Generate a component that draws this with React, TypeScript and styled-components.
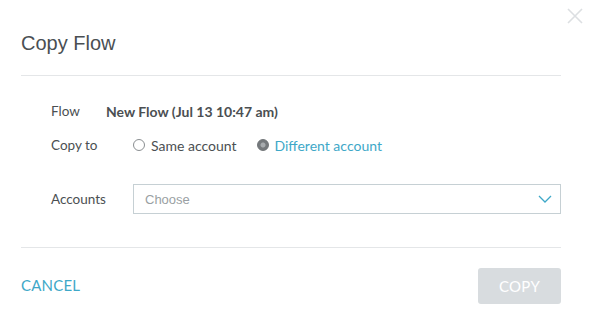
import styled, { createGlobalStyle } from "styled-components";

const GlobalStyle = createGlobalStyle`
  html, body {
    margin: 0;
    padding: 0;
    background: #ffffff;
  }
  body {
    font-family: "Lato", "Open Sans", sans-serif;
  }
`;

const TEAL = "#3ea8c8";

export default function App() {
  return (
    <>
      <GlobalStyle />
      <S.Dialog>
        <S.Close aria-label="close">
          <svg width="16" height="16" viewBox="0 0 16 16">
            <path d="M1 1 L15 15 M15 1 L1 15" stroke="#dcdfe2" strokeWidth="1.6" fill="none" />
          </svg>
        </S.Close>
        <S.Header>
          <S.Title>Copy Flow</S.Title>
        </S.Header>
        <S.Body>
          <S.Row $height={34}>
            <S.Label $width={55}>Flow</S.Label>
            <S.Value>New Flow (Jul 13 10:47 am)</S.Value>
          </S.Row>
          <S.Row $height={34}>
            <S.Label $width={82}>Copy to</S.Label>
            <S.RadioGroup>
              <S.RadioOption>
                <S.Radio />
                <S.RadioText>Same account</S.RadioText>
              </S.RadioOption>
              <S.RadioOption>
                <S.Radio $checked />
                <S.RadioText $active>Different account</S.RadioText>
              </S.RadioOption>
            </S.RadioGroup>
          </S.Row>
          <S.Row $height={30} $top={22}>
            <S.Label $width={82}>Accounts</S.Label>
            <S.Select>
              <S.Placeholder>Choose</S.Placeholder>
              <svg width="14" height="8" viewBox="0 0 14 8">
                <path d="M1 1 L7 7 L13 1" stroke={TEAL} strokeWidth="1.3" fill="none" />
              </svg>
            </S.Select>
          </S.Row>
        </S.Body>
        <S.Footer>
          <S.TextButton>CANCEL</S.TextButton>
          <S.PrimaryButton disabled>COPY</S.PrimaryButton>
        </S.Footer>
      </S.Dialog>
    </>
  );
}

const S = {
  Dialog: styled.div`
    position: relative;
    width: 589px;
    height: 316px;
    box-sizing: border-box;
    padding: 0 28px 0 21px;
    background: #ffffff;
    color: #4b4f52;
    font-size: 14px;
  `,
  Close: styled.button`
    position: absolute;
    top: 8px;
    right: 6px;
    width: 16px;
    height: 16px;
    padding: 0;
    border: none;
    background: none;
    display: flex;
  `,
  Header: styled.div`
    height: 76px;
    display: flex;
    align-items: center;
    padding-top: 11px;
    box-sizing: border-box;
    border-bottom: 1px solid #e4e6e8;
  `,
  Title: styled.h1`
    margin: 0;
    font-family: "Liberation Sans", Arial, sans-serif;
    font-weight: 400;
    font-size: 20px;
    color: #4a4f53;
  `,
  Body: styled.div`
    display: flex;
    flex-direction: column;
    padding: 18px 0 0 30px;
    height: 172px;
    box-sizing: border-box;
    border-bottom: 1px solid #e4e6e8;
  `,
  Row: styled.div<{ $height: number; $top?: number }>`
    display: flex;
    align-items: center;
    height: ${({ $height }) => $height}px;
    margin-top: ${({ $top }) => $top ?? 0}px;
  `,
  Label: styled.span<{ $width: number }>`
    width: ${({ $width }) => $width}px;
    flex-shrink: 0;
    font-size: 13.5px;
    color: #4b4f52;
  `,
  Value: styled.span`
    font-weight: 700;
    color: #4b4f52;
  `,
  RadioGroup: styled.div`
    display: flex;
    align-items: center;
    gap: 20px;
  `,
  RadioOption: styled.label`
    display: flex;
    align-items: center;
    gap: 6px;
  `,
  Radio: styled.span<{ $checked?: boolean }>`
    width: 12px;
    height: 12px;
    box-sizing: border-box;
    border-radius: 50%;
    border: 1px solid ${({ $checked }) => ($checked ? "#6f7376" : "#8a8e91")};
    background: ${({ $checked }) =>
      $checked ? "radial-gradient(circle, #a7abae 0 2px, #75797c 3px)" : "#ffffff"};
  `,
  RadioText: styled.span<{ $active?: boolean }>`
    color: ${({ $active }) => ($active ? TEAL : "#4b4f52")};
  `,
  Select: styled.div`
    flex: 1;
    height: 30px;
    box-sizing: border-box;
    border: 1px solid #c6d0d4;
    display: flex;
    align-items: center;
    justify-content: space-between;
    padding: 0 8px 0 11px;
  `,
  Placeholder: styled.span`
    font-family: "Liberation Sans", Arial, sans-serif;
    color: #9a9fa3;
    font-size: 13px;
  `,
  Footer: styled.div`
    display: flex;
    align-items: center;
    justify-content: space-between;
    padding-top: 20px;
  `,
  TextButton: styled.button`
    border: none;
    background: none;
    padding: 0 0 2px;
    font-family: "Lato", sans-serif;
    font-size: 15px;
    color: ${TEAL};
    letter-spacing: 0.2px;
  `,
  PrimaryButton: styled.button`
    width: 83px;
    height: 36px;
    border: none;
    border-radius: 3px;
    background: #d8dcdf;
    color: #ffffff;
    font-family: "Lato", sans-serif;
    font-size: 15px;
    letter-spacing: 0.3px;
  `,
};
